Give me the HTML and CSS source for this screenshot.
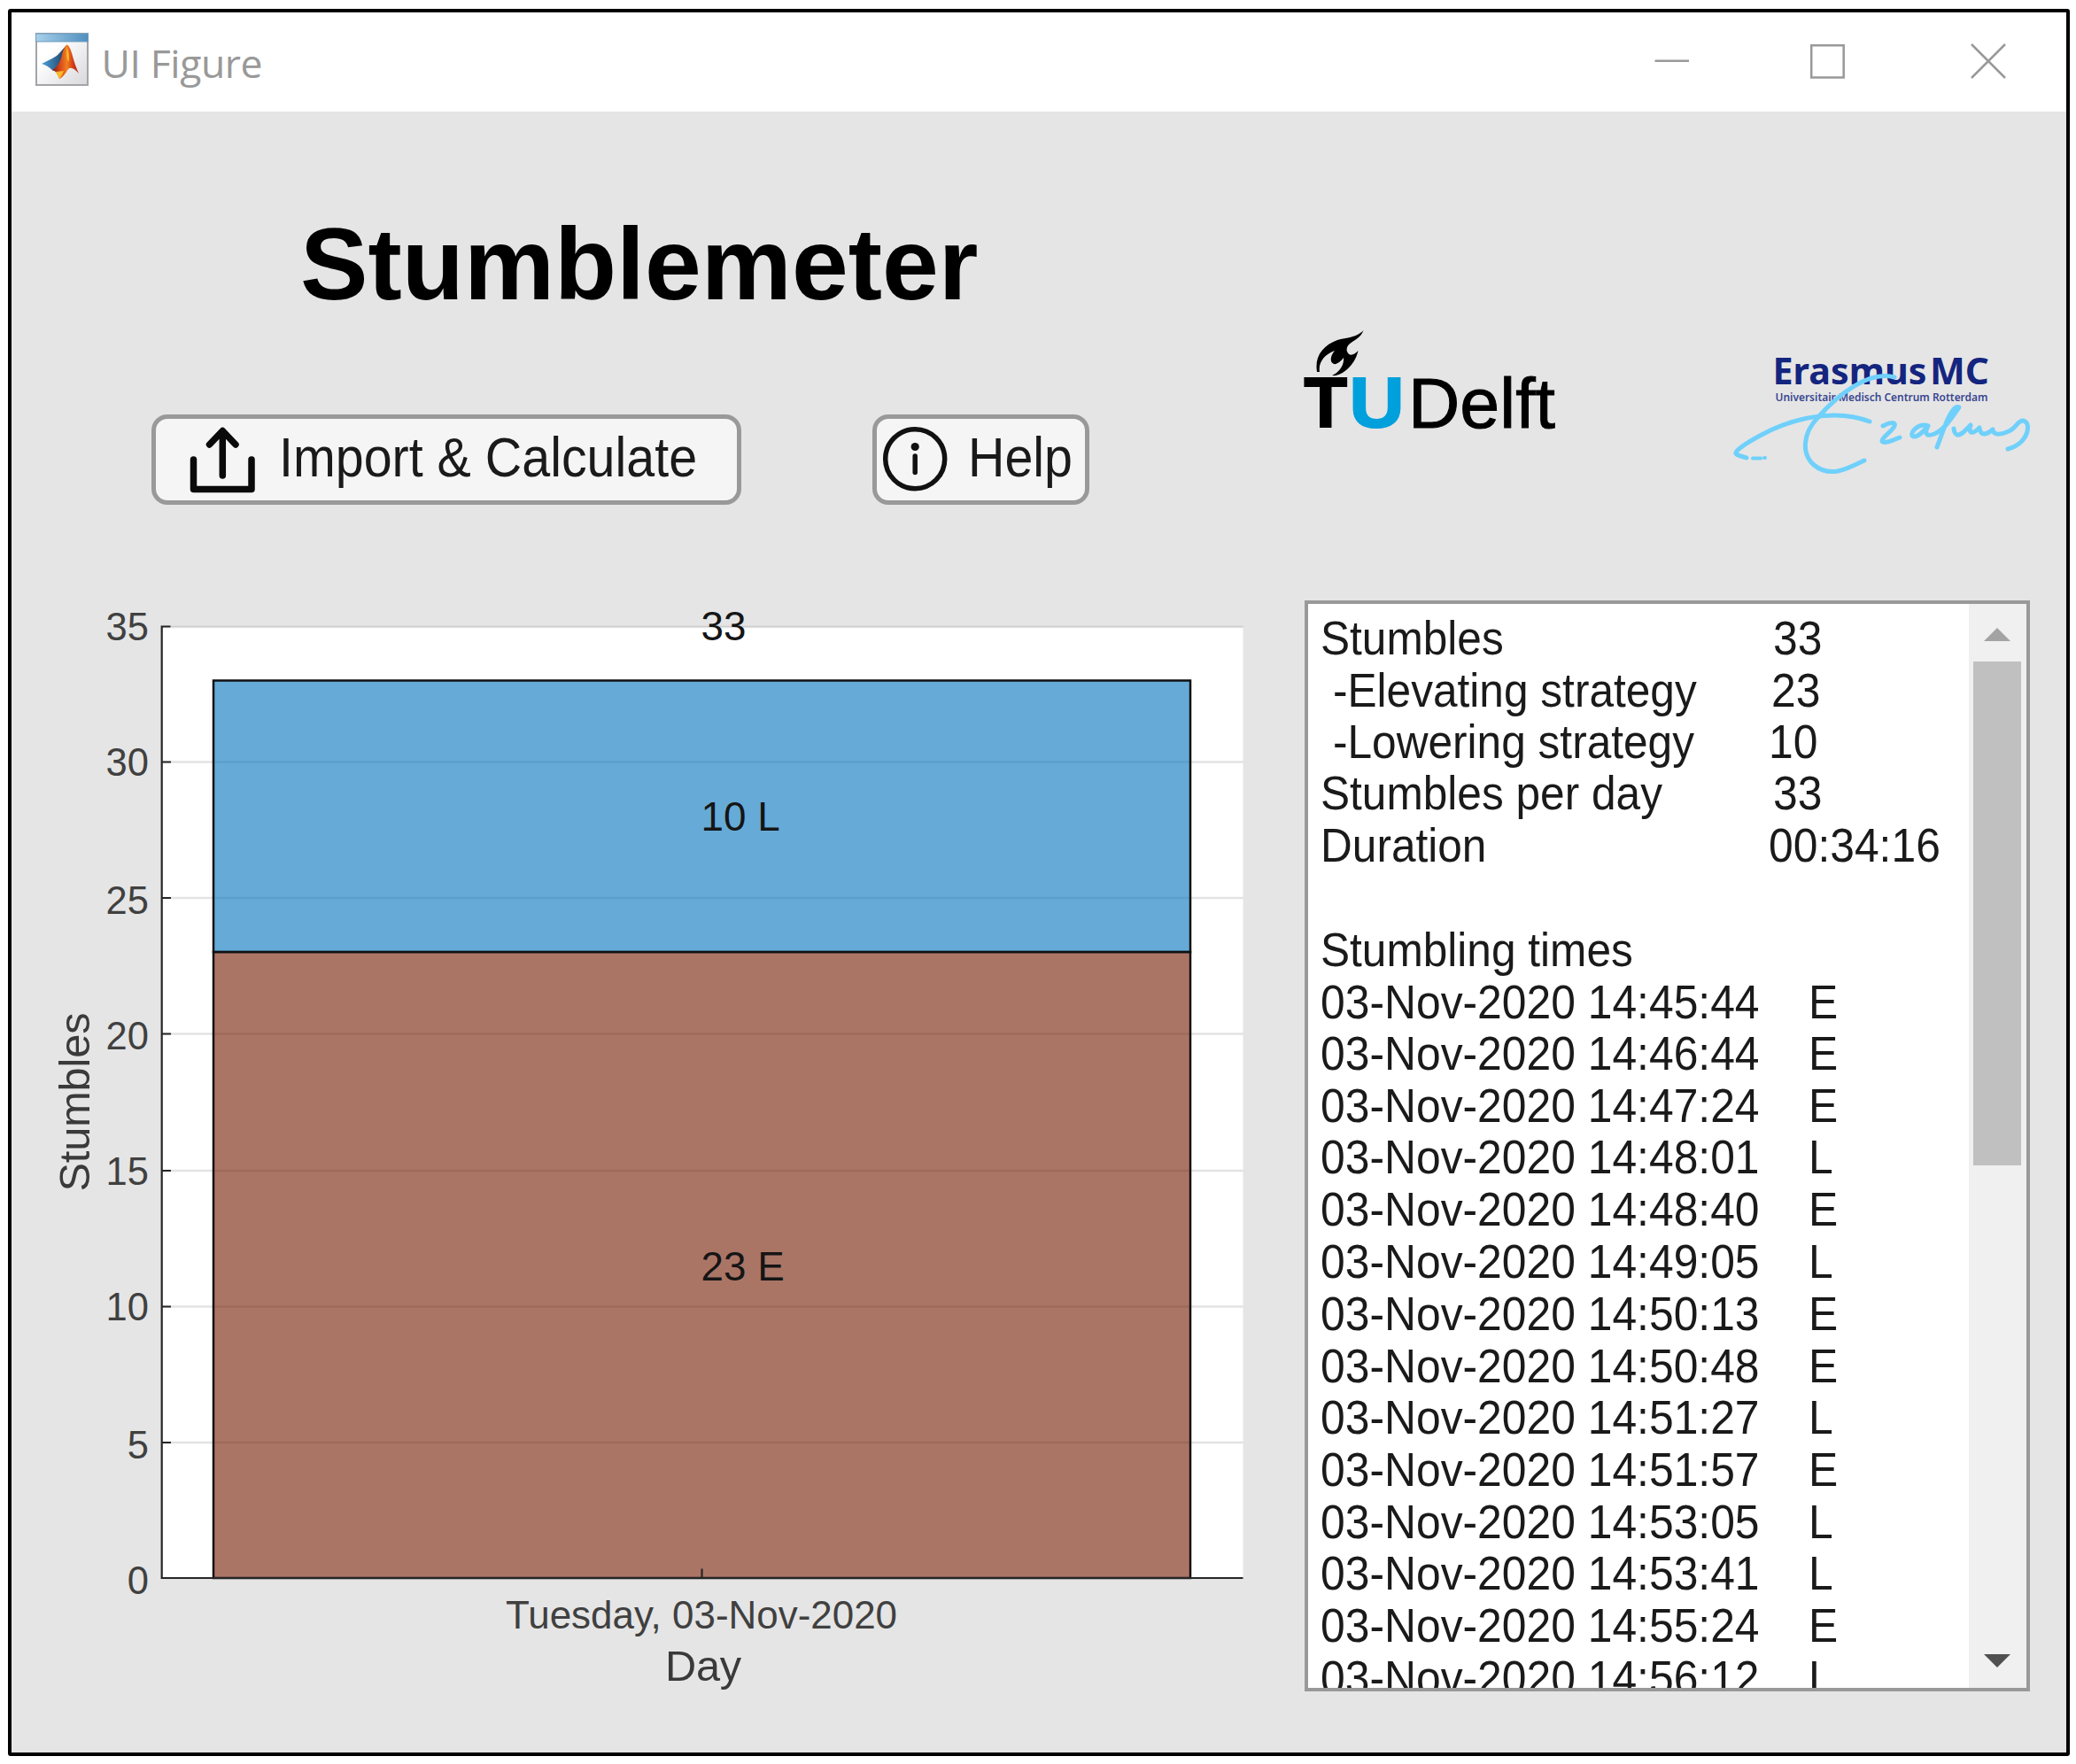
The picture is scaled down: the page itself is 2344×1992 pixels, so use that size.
FILE: index.html
```html
<!DOCTYPE html>
<html lang="en">
<head>
<meta charset="utf-8">
<title>UI Figure</title>
<link rel="stylesheet" href="styles.css">
</head>
<body>
<div class="window">
  <header class="titlebar">
    <svg class="app-icon" viewBox="0 0 60 60">
      <defs>
        <linearGradient id="bar" x1="0" x2="1"><stop offset="0" stop-color="#a9d0ea"/><stop offset="1" stop-color="#4f8fc0"/></linearGradient>
        <linearGradient id="pane" x1="0" y1="0" x2="1" y2="1"><stop offset="0.3" stop-color="#fff"/><stop offset="1" stop-color="#d8d8dc"/></linearGradient>
        <linearGradient id="peak" x1="0" x2="1"><stop offset="0" stop-color="#7c1c12"/><stop offset="0.3" stop-color="#d8481a"/><stop offset="0.55" stop-color="#f0801f"/><stop offset="0.75" stop-color="#d9421a"/><stop offset="1" stop-color="#a32012"/></linearGradient>
        <linearGradient id="wing" x1="0" x2="1"><stop offset="0" stop-color="#4d9fd6"/><stop offset="1" stop-color="#1d3f66"/></linearGradient>
      </defs>
      <rect x="1" y="1" width="58" height="58" fill="url(#pane)" stroke="#a4a4a8" stroke-width="2"/>
      <rect x="0.500" y="1" width="59" height="9" fill="url(#bar)" stroke="#6f9dbd"/>
      <path d="M7 35 L19 29 Q24 27 28 22 L34 15 L29 37 L20 43 Q14 37 7 35Z" fill="url(#wing)"/>
      <path d="M35 13.500 Q38 13 41 23 Q45 38 49 46 Q41 37 37 41 Q32 50 27 52 Q24 43 19 42 Q25 39 29 29 Q31 18 35 13.500Z" fill="url(#peak)"/>
      <path d="M35.500 16 Q39 25 37.500 33 Q34 29 35.500 16Z M23 44 L32 43 Q29 51 27 52Z" fill="#fbb829"/>
    </svg>
    <span class="caption">UI Figure</span>
    <svg class="controls" viewBox="1868 48 400 44">
      <path d="M1868.500 68.800H1907M2045.200 51.200h36.500v36.200h-36.500zM2226 50l38 38M2264 50l-38 38" fill="none" stroke="#999" stroke-width="2.500"/>
    </svg>
  </header>

  <main class="body">
    <section class="intro">
      <h1>Stumblemeter</h1>
      <div class="buttons">
        <button class="btn btn-import">
          <svg class="icon" viewBox="214 480 76 78" width="76" height="78" fill="none" stroke="#0a0a0a" stroke-linecap="round" stroke-linejoin="round">
            <path d="M218.500 518V551.500H284V518" stroke-width="7.500"/>
            <path d="M251.300 536V486M236.500 501L251.300 485.500L266 501" stroke-width="7.500"/>
          </svg>
          <span>Import &amp; Calculate</span>
        </button>
        <button class="btn btn-help">
          <svg class="icon" viewBox="997 480 74 76" width="74" height="76">
            <circle cx="1034.200" cy="517.200" r="33.500" fill="none" stroke="#111" stroke-width="5.500"/>
            <circle cx="1034.200" cy="503.500" r="4.600" fill="#111"/>
            <path d="M1034.200 514V532.500" stroke="#111" stroke-width="5.500" stroke-linecap="round"/>
          </svg>
          <span>Help</span>
        </button>
      </div>
    </section>

    <section class="logos">
      <svg class="logo-tu" viewBox="1473 370 290 120">
        <path d="M1539.500 373C1531 382 1519 381 1510 384C1494 390 1484 402 1487 420L1490 420C1488 409 1496 400 1507 396C1502 402 1501 409 1506 411C1509 412 1514 408 1517 404C1518 413 1511 421 1504 424C1511 425 1519 420 1525 413C1530 407 1532 402 1533.500 396C1528 402 1523 402 1521 397C1519 391 1525 387 1530 384C1535 381 1538 377 1539.500 373Z"/>
        <text x="1472.500" y="482.300" class="tu" textLength="48.500" lengthAdjust="spacingAndGlyphs">T</text>
        <text x="1523.500" y="482.300" class="tu tu-u" textLength="62" lengthAdjust="spacingAndGlyphs">U</text>
        <text x="1590" y="483" class="delft" textLength="166" lengthAdjust="spacingAndGlyphs">Delft</text>
      </svg>
      <svg class="logo-emc" viewBox="1950 370 345 170">
        <g class="emc">
          <text x="2001.500" y="434" textLength="174" lengthAdjust="spacingAndGlyphs">Erasmus</text>
          <text x="2179" y="434" textLength="67" lengthAdjust="spacingAndGlyphs">MC</text>
          <text x="2004.500" y="452.500" class="sub" textLength="240" lengthAdjust="spacingAndGlyphs">Universitair Medisch Centrum Rotterdam</text>
        </g>
        <g fill="none" stroke="#6fd0fb" stroke-width="5" stroke-linecap="round" stroke-linejoin="round">
          <path d="M2139 426C2110 418 2075 446 2053 471C2035 489 2034 513 2048 525C2066 540 2085 530 2105 520"/>
          <path d="M2111 476C2070 460 2020 474 1989 491C1974 499 1962 507 1960 511C1959 514 1966 515 1972 517"/>
          <path d="M1979 517.500H1988M1992 517H1993" stroke-width="4"/>
          <path d="M2126 481C2133 477 2141 476 2139 481C2137 487 2125 493 2125 498C2126 502 2138 497 2145 494"/>
          <path d="M2177 481C2167 477 2157 487 2159 492C2163 496 2171 488 2177 481C2172 491 2176 493 2184 490C2196 485 2204 471 2212 460C2208 457 2201 467 2196 481L2187 505"/>
          <path d="M2206 484C2207 492 2211 493 2217 488L2225 480C2222 490 2227 491 2235 483C2236 493 2243 491 2250 485C2251 493 2261 490 2268 487C2276 484 2278 475 2284 475C2292 476 2291 489 2283 498Q2276 505 2267 507"/>
        </g>
      </svg>
    </section>

    <svg class="chart" viewBox="13 678 1460 1232">
      <rect x="183" y="708" width="1220.500" height="1074" fill="#fff"/>
      <path class="grid" d="M184 708H1403.500M184 860.500H1403.500M184 1014H1403.500M184 1167.500H1403.500M184 1322H1403.500M184 1475.500H1403.500M184 1629H1403.500"/>
      <g stroke="#111" stroke-width="2.500" fill-opacity="0.600">
        <rect x="241" y="1075" width="1103" height="707" fill="#731900"/>
        <rect x="241" y="768.500" width="1103" height="306.500" fill="#0072bd"/>
      </g>
      <path class="axis" d="M192.500 707.500H182.700V1782H1403.500M183 860.500H193M183 1014H193M183 1167.500H193M183 1322H193M183 1475.500H193M183 1629H193M792.500 1782V1771.500"/>
      <g class="ticks">
        <text x="168" y="723">35</text>
        <text x="168" y="876">30</text>
        <text x="168" y="1031.500">25</text>
        <text x="168" y="1184.500">20</text>
        <text x="168" y="1338">15</text>
        <text x="168" y="1491">10</text>
        <text x="168" y="1646.500">5</text>
        <text x="168" y="1800">0</text>
      </g>
      <text class="date" x="571" y="1839" textLength="442" lengthAdjust="spacingAndGlyphs">Tuesday, 03-Nov-2020</text>
      <text class="label" x="751" y="1898" textLength="86">Day</text>
      <text class="label" transform="translate(101 1345.500) rotate(-90)" textLength="202">Stumbles</text>
      <g class="values">
        <text x="791.500" y="723">33</text>
        <text x="791.500" y="938">10 L</text>
        <text x="791.500" y="1446">23 E</text>
      </g>
    </svg>

    <section class="log">
      <div class="lines">
        <div class="row sum"><span>Stumbles</span><span class="v33">33</span></div>
        <div class="row sum"><span class="sub-item">-Elevating strategy</span><span class="v23">23</span></div>
        <div class="row sum"><span class="sub-item">-Lowering strategy</span><span>10</span></div>
        <div class="row sum"><span>Stumbles per day</span><span class="v33">33</span></div>
        <div class="row sum"><span>Duration</span><span>00:34:16</span></div>
        <div class="row">&nbsp;</div>
        <div class="row sum"><span>Stumbling times</span></div>
        <div class="row time"><span>03-Nov-2020 14:45:44</span><span>E</span></div>
        <div class="row time"><span>03-Nov-2020 14:46:44</span><span>E</span></div>
        <div class="row time"><span>03-Nov-2020 14:47:24</span><span>E</span></div>
        <div class="row time"><span>03-Nov-2020 14:48:01</span><span>L</span></div>
        <div class="row time"><span>03-Nov-2020 14:48:40</span><span>E</span></div>
        <div class="row time"><span>03-Nov-2020 14:49:05</span><span>L</span></div>
        <div class="row time"><span>03-Nov-2020 14:50:13</span><span>E</span></div>
        <div class="row time"><span>03-Nov-2020 14:50:48</span><span>E</span></div>
        <div class="row time"><span>03-Nov-2020 14:51:27</span><span>L</span></div>
        <div class="row time"><span>03-Nov-2020 14:51:57</span><span>E</span></div>
        <div class="row time"><span>03-Nov-2020 14:53:05</span><span>L</span></div>
        <div class="row time"><span>03-Nov-2020 14:53:41</span><span>L</span></div>
        <div class="row time"><span>03-Nov-2020 14:55:24</span><span>E</span></div>
        <div class="row time"><span>03-Nov-2020 14:56:12</span><span>L</span></div>
      </div>
      <div class="scrollbar">
        <svg class="arrow" viewBox="0 0 30 15"><path d="M0 15L15 0L30 15Z" fill="#a3a3a3"/></svg>
        <div class="thumb"></div>
        <svg class="arrow" viewBox="0 0 30 15"><path d="M0 0L15 15L30 0Z" fill="#505050"/></svg>
      </div>
    </section>
  </main>
</div>
</body>
</html>
```

FILE: styles.css
```css
* { box-sizing: border-box; }

body {
  margin: 0;
  padding: 10px 0 0 9px;
  width: 2344px;
  height: 1992px;
  overflow: hidden;
  background: #fff;
  font-family: "Liberation Sans", Arial, sans-serif;
  color: #1a1a1a;
}

.window {
  width: 2328px;
  height: 1973px;
  border: 4px solid #000;
  border-radius: 3px;
  background: #e5e5e5;
}

.titlebar {
  display: flex;
  align-items: flex-start;
  height: 112px;
  background: #fff;
}
.app-icon { width: 60px; height: 60px; margin: 23px 0 0 27px; }
.caption {
  margin: 27px 0 0 14.5px;
  font: 44.5px/60px "Open Sans", "Noto Sans", sans-serif;
  letter-spacing: -0.4px;
  color: #999;
}
.controls { width: 400px; height: 44px; margin: 34px 65px 0 auto; }

.body {
  display: grid;
  grid-template-columns: 1460px 819px;
  grid-template-rows: 552px 1232px;
}

h1 {
  margin: 112px 0 0 326px;
  font-size: 114.8px;
  line-height: 120px;
  font-weight: bold;
  color: #000;
}

.buttons {
  display: flex;
  gap: 148px;
  margin: 110px 0 0 158px;
}
.btn {
  display: flex;
  align-items: flex-start;
  height: 102px;
  padding: 0;
  border: 5px solid #999;
  border-radius: 18px;
  background: #f5f5f5;
  font: 57.4px/90px "Liberation Sans", Arial, sans-serif;
  color: #1a1a1a;
}
.btn-import { width: 666px; padding-left: 38px; }
.btn-help { width: 245px; padding-left: 6px; }
.icon { flex: none; margin-top: 8px; }
.btn span { white-space: nowrap; transform: scaleY(1.09); transform-origin: 0 65px; }
.btn-import span { margin-left: 25px; }
.btn-help span { margin-left: 23px; }

.logos { display: flex; align-items: flex-start; padding-top: 244px; }
.logo-tu { width: 290px; height: 120px; overflow: visible; }
.logo-emc { flex: none; width: 345px; height: 170px; margin-left: 187px; overflow: visible; }
.tu { font-size: 79px; font-weight: bold; fill: #000; stroke: #000; stroke-width: 2; }
.tu-u { fill: #00a0dc; stroke: #00a0dc; }
.delft { font-size: 80px; fill: #000; stroke: #000; stroke-width: 1; }
.emc { font: bold 42px "Noto Sans", "Open Sans", sans-serif; fill: #14257f; }
.sub { font-size: 13px; font-weight: 600; fill: #3a4791; }

.chart { width: 1460px; height: 1232px; }
.grid { fill: none; stroke: #262626; stroke-opacity: 0.13; stroke-width: 2.5; }
.axis { fill: none; stroke: #262626; stroke-width: 2.2; }
.ticks { font-size: 43.5px; fill: #404040; text-anchor: end; }
.date { font-size: 44px; fill: #404040; }
.label { font-size: 48.7px; fill: #3a3a3a; }
.values { font-size: 45.8px; fill: #151515; }

.log {
  display: flex;
  justify-content: space-between;
  height: 1232px;
  border: 4px solid #999;
  background: #fff;
  overflow: hidden;
}
.lines {
  padding: 8.9px 0 0 14px;
  width: 740px;
  height: 1120px;
  font-size: 49.8px;
  line-height: 53.87px;
  white-space: nowrap;
  transform: scaleY(1.09);
  transform-origin: 0 0;
}
.row { display: flex; height: 53.87px; }
.sum > span:first-child { width: 506px; font-size: 49.6px; }
.time > span:first-child { width: 551px; }
.sub-item { padding-left: 14px; }
.v33 { padding-left: 5px; }
.v23 { padding-left: 3px; }

.scrollbar {
  display: flex;
  flex-direction: column;
  align-items: center;
  flex: none;
  width: 65px;
  padding: 27px 1px 23px 0;
  background: #f0f0f0;
}
.arrow { width: 30px; height: 15px; }
.thumb { width: 54px; height: 569px; margin: 23px 0 auto; background: #c0c0c0; }
```
